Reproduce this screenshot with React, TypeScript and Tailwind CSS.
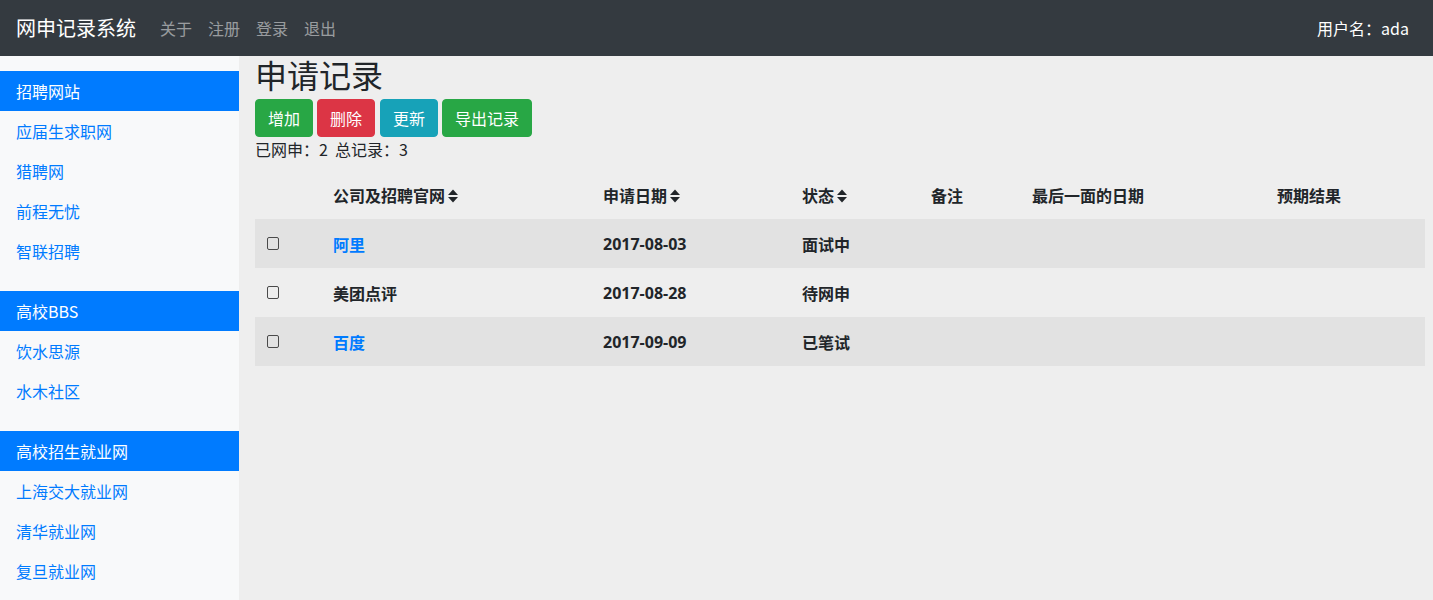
import React from 'react';

const font = { fontFamily: '"Noto Sans CJK SC", "Liberation Sans", sans-serif' };

const groups = [
  { title: '招聘网站', items: ['应届生求职网', '猎聘网', '前程无忧', '智联招聘'] },
  { title: '高校BBS', items: ['饮水思源', '水木社区'] },
  { title: '高校招生就业网', items: ['上海交大就业网', '清华就业网', '复旦就业网'] },
];

const rows = [
  { company: '阿里', link: true, date: '2017-08-03', status: '面试中' },
  { company: '美团点评', link: false, date: '2017-08-28', status: '待网申' },
  { company: '百度', link: true, date: '2017-09-09', status: '已笔试' },
];

const SortIcon: React.FC = () => (
  <svg width="10" height="14" viewBox="0 0 10 14" className="inline-block ml-[3px] -mt-[2px] align-middle">
    <path d="M0 6 L5 0.5 L10 6 Z" fill="#212529" />
    <path d="M0 8 L5 13.5 L10 8 Z" fill="#212529" />
  </svg>
);

const Navbar: React.FC = () => (
  <header className="h-14 bg-[#343a40] flex items-center justify-between px-4">
    <div className="flex items-center">
      <span className="text-white text-[20px] mr-4">网申记录系统</span>
      <nav className="flex text-base text-white/50">
        {['关于', '注册', '登录', '退出'].map((n) => (
          <a key={n} href="#" className="px-2">
            {n}
          </a>
        ))}
      </nav>
    </div>
    <span className="text-white text-base px-2">用户名：ada</span>
  </header>
);

const Sidebar: React.FC = () => (
  <aside className="w-[239px] shrink-0 bg-[#f8f9fa] pt-[15px] min-h-[544px]">
    {groups.map((g) => (
      <div key={g.title} className="mb-5">
        <div className="h-10 flex items-center px-4 bg-[#007bff] text-white text-base">{g.title}</div>
        {g.items.map((it) => (
          <a key={it} href="#" className="h-10 flex items-center px-4 text-[#007bff] text-base">
            {it}
          </a>
        ))}
      </div>
    ))}
  </aside>
);

export default function App() {
  return (
    <div style={font} className="w-[1433px] h-[600px] overflow-hidden bg-[#eeeeee] text-[#212529]">
      <Navbar />
      <div className="flex">
        <Sidebar />
        <main className="flex-1 pl-4 pr-2">
          <h1 className="text-[32px] leading-[37px] pb-[6px] m-0">申请记录</h1>
          <div className="flex gap-1 text-white text-base">
            <button className="h-[38px] px-3 rounded border border-[#28a745] bg-[#28a745]">增加</button>
            <button className="h-[38px] px-3 rounded border border-[#dc3545] bg-[#dc3545]">删除</button>
            <button className="h-[38px] px-3 rounded border border-[#17a2b8] bg-[#17a2b8] ml-[1px]">更新</button>
            <button className="h-[38px] px-3 rounded border border-[#28a745] bg-[#28a745]">导出记录</button>
          </div>
          <p className="text-base leading-6">已网申：2&nbsp;&nbsp;总记录：3</p>
          <table className="mt-[9px] w-[1170px] text-base font-bold border-collapse">
            <thead>
              <tr className="h-[49px]">
                <th className="w-[66px]"></th>
                <th className="w-[270px] text-left px-3">公司及招聘官网<SortIcon /></th>
                <th className="w-[199px] text-left px-3">申请日期<SortIcon /></th>
                <th className="w-[129px] text-left px-3">状态<SortIcon /></th>
                <th className="w-[101px] text-left px-3">备注</th>
                <th className="w-[245px] text-left px-3">最后一面的日期</th>
                <th className="text-left px-3">预期结果</th>
              </tr>
            </thead>
            <tbody>
              {rows.map((r, i) => (
                <tr key={r.date} className={`h-[49px] ${i % 2 === 0 ? 'bg-[#e2e2e2]' : ''}`}>
                  <td className="px-3">
                    <input
                      type="checkbox"
                      className="block appearance-none w-[12px] h-[13px] border border-[#4a4a4a] rounded-[2px] bg-transparent"
                    />
                  </td>
                  <td className="px-3">
                    {r.link ? (
                      <a href="#" className="text-[#007bff]">
                        {r.company}
                      </a>
                    ) : (
                      r.company
                    )}
                  </td>
                  <td className="px-3" style={{ fontFamily: '"Open Sans", "Noto Sans CJK SC", sans-serif' }}>
                    {r.date}
                  </td>
                  <td className="px-3">{r.status}</td>
                  <td className="px-3"></td>
                  <td className="px-3"></td>
                  <td className="px-3"></td>
                </tr>
              ))}
            </tbody>
          </table>
        </main>
      </div>
    </div>
  );
}
